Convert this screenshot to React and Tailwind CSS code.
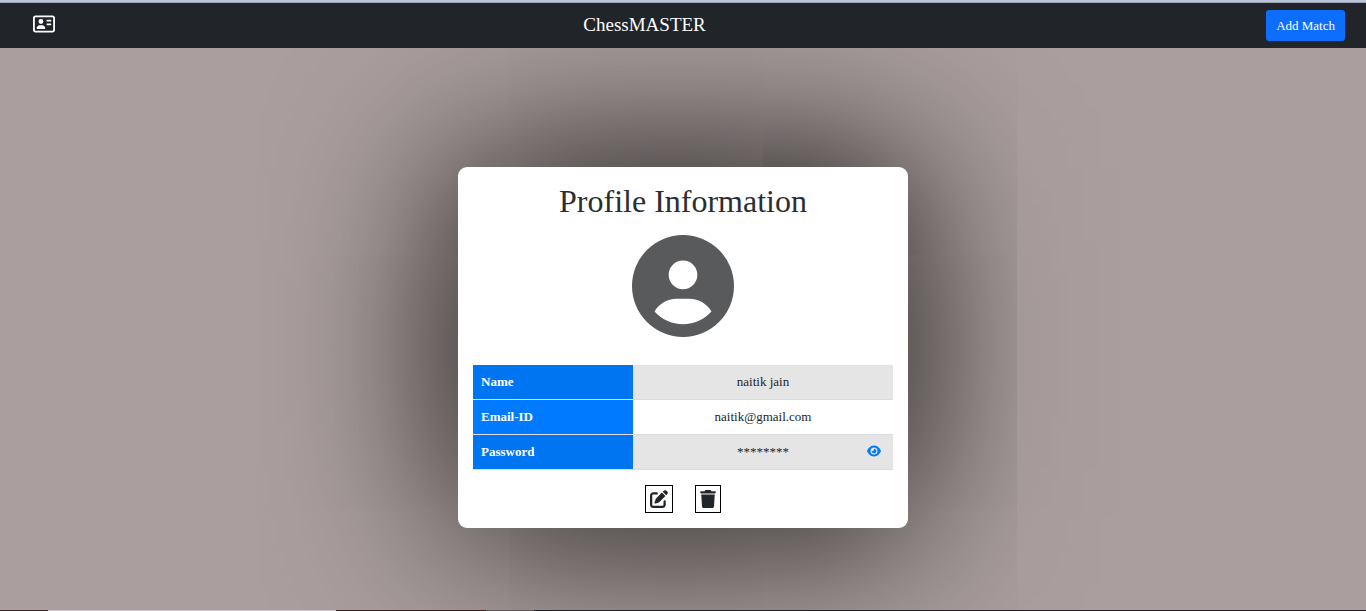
import { FaCircleUser, FaEye, FaPenToSquare, FaRegAddressCard, FaTrash } from "react-icons/fa6";

const labelCell = "w-40 border-b border-[#dee2e6] px-2 text-left font-bold text-white";
const valueCell = "relative border-b border-[#d9dbdd] px-2 text-center text-[#212529]";

export default function App() {
  return (
    <div className="flex min-h-screen flex-col bg-[#aa9f9e] font-['Liberation_Serif',serif]">
      <div className="h-[3px] border-b border-[#9da5b5] bg-[#bac4d8]" />
      <header className="relative z-10 flex h-[45px] items-center justify-between bg-[#212529] pr-[21px] pl-[33px] text-white">
        <button type="button" aria-label="Profile" className="pb-1">
          <FaRegAddressCard className="size-[22px]" />
        </button>
        <h1 className="pr-8 pb-px text-[19px]">ChessMASTER</h1>
        <button type="button" className="h-[31px] rounded-[3px] bg-[#0d6efd] px-[10px] text-[13px]">
          Add Match
        </button>
      </header>

      <main className="flex grow items-center justify-center overflow-hidden pt-[37px]">
        <section className="flex w-[450px] flex-col items-center rounded-[9px] bg-white p-[15px] shadow-[0_0_180px_#000]">
          <h2 className="text-[32px] leading-[38px] text-[#2b2e31]">Profile Information</h2>
          <FaCircleUser className="mt-[15px] size-[102px] text-[#595a5c]" />
          <table className="mt-7 w-full border-separate border-spacing-0 text-[13px]">
            <tbody>
              <tr className="h-[35px]">
                <th scope="row" className={`${labelCell} bg-[#0075f2]`}>Name</th>
                <td className={`${valueCell} bg-[#e5e5e5]`}>naitik jain</td>
              </tr>
              <tr className="h-[35px]">
                <th scope="row" className={`${labelCell} bg-[#007bff]`}>Email-ID</th>
                <td className={`${valueCell} bg-white`}>naitik@gmail.com</td>
              </tr>
              <tr className="h-[35px]">
                <th scope="row" className={`${labelCell} bg-[#0075f2]`}>Password</th>
                <td className={`${valueCell} bg-[#e5e5e5]`}>
                  ********
                  <button
                    type="button"
                    aria-label="Show password"
                    className="absolute inset-y-0 right-3 flex items-center pb-0.5 text-[#007bff]"
                  >
                    <FaEye className="size-[14px]" />
                  </button>
                </td>
              </tr>
            </tbody>
          </table>
          <div className="mt-[15px] flex gap-[22px] text-[#212529]">
            <button type="button" aria-label="Edit profile" className="flex h-7 w-7 items-center justify-center border border-black">
              <FaPenToSquare className="size-[18px]" />
            </button>
            <button type="button" aria-label="Delete profile" className="flex h-7 w-[26px] items-center justify-center border border-black">
              <FaTrash className="size-[18px]" />
            </button>
          </div>
        </section>
      </main>

      <div className="relative z-10 flex h-px bg-[#231f26]">
        <div className="w-12 bg-[#3a2427]" />
        <div className="w-72 bg-[#d0c5c8]" />
        <div className="w-[150px] bg-[#33221f]" />
        <div className="w-12 bg-[#5f5658]" />
      </div>
    </div>
  );
}
